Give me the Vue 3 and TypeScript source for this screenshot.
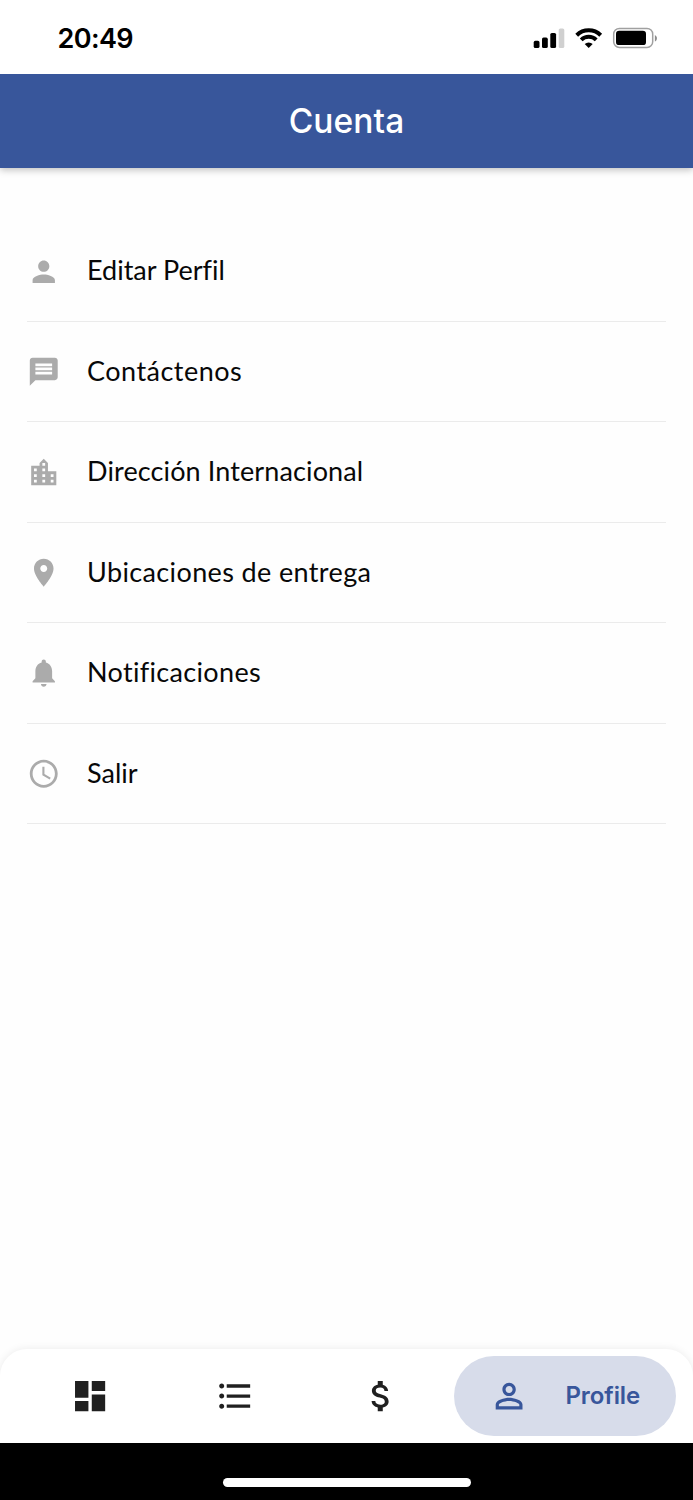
<script setup lang="ts">
interface MenuItem {
  label: string
  spacing: number
  icon: string
}

const items: MenuItem[] = [
  { label: 'Editar Perfil', spacing: 0, icon: 'M12 12c2.21 0 4-1.79 4-4s-1.79-4-4-4-4 1.79-4 4 1.79 4 4 4zm0 2c-2.67 0-8 1.34-8 4v2h16v-2c0-2.66-5.33-4-8-4z' },
  { label: 'Contáctenos', spacing: 0.48, icon: 'M20 2H4c-1.1 0-1.99.9-1.99 2L2 22l4-4h14c1.1 0 2-.9 2-2V4c0-1.1-.9-2-2-2zm-2 12H6v-2h12v2zm0-3H6V9h12v2zm0-3H6V6h12v2z' },
  { label: 'Dirección Internacional', spacing: 0.12, icon: 'M15 11V5l-3-3-3 3v2H3v14h18V11h-6zm-8 8H5v-2h2v2zm0-4H5v-2h2v2zm0-4H5V9h2v2zm6 8h-2v-2h2v2zm0-4h-2v-2h2v2zm0-4h-2V9h2v2zm0-4h-2V5h2v2zm6 12h-2v-2h2v2zm0-4h-2v-2h2v2z' },
  { label: 'Ubicaciones de entrega', spacing: 0.37, icon: 'M12 2C8.13 2 5 5.13 5 9c0 5.25 7 13 7 13s7-7.75 7-13c0-3.87-3.13-7-7-7zm0 9.5c-1.38 0-2.5-1.12-2.5-2.5s1.12-2.5 2.5-2.5 2.5 1.12 2.5 2.5-1.12 2.5-2.5 2.5z' },
  { label: 'Notificaciones', spacing: 0.33, icon: 'M12 22c1.1 0 2-.9 2-2h-4c0 1.1.89 2 2 2zm6-6v-5c0-3.07-1.64-5.64-4.5-6.32V4c0-.83-.67-1.5-1.5-1.5s-1.5.67-1.5 1.5v.68C7.63 5.36 6 7.92 6 11v5l-2 2v1h16v-1l-2-2z' },
  { label: 'Salir', spacing: 0, icon: 'M11.99 2C6.47 2 2 6.48 2 12s4.47 10 9.99 10C17.52 22 22 17.52 22 12S17.52 2 11.99 2zM12 20c-4.42 0-8-3.58-8-8s3.58-8 8-8 8 3.58 8 8-3.58 8-8 8zm.5-13H11v6l5.25 3.15.75-1.23-4.5-2.67z' },
]

const tabs: string[] = [
  'M3 13h8V3H3v10zm0 8h8v-6H3v6zm10 0h8V11h-8v10zm0-18v6h8V3h-8z',
  'M4 10.5c-.83 0-1.5.67-1.5 1.5s.67 1.5 1.5 1.5 1.5-.67 1.5-1.5-.67-1.5-1.5-1.5zm0-6c-.83 0-1.5.67-1.5 1.5S3.17 7.5 4 7.5 5.5 6.83 5.5 6 4.83 4.5 4 4.5zm0 12c-.83 0-1.5.68-1.5 1.5s.68 1.5 1.5 1.5 1.5-.68 1.5-1.5-.67-1.5-1.5-1.5zM7 19h14v-2H7v2zm0-6h14v-2H7v2zm0-8v2h14V5H7z',
  'M11.8 10.9c-2.27-.59-3-1.2-3-2.15 0-1.09 1.01-1.85 2.7-1.85 1.78 0 2.44.85 2.5 2.1h2.21c-.07-1.72-1.12-3.3-3.21-3.81V3h-3v2.16c-1.94.42-3.5 1.68-3.5 3.61 0 2.31 1.91 3.46 4.7 4.13 2.5.6 3 1.48 3 2.41 0 .69-.49 1.79-2.7 1.79-2.06 0-2.87-.92-2.98-2.1h-2.2c.12 2.19 1.76 3.42 3.68 3.83V21h3v-2.15c1.95-.37 3.5-1.5 3.5-3.55 0-2.84-2.43-3.81-4.7-4.4z',
]
</script>

<template>
  <div class="screen">
    <div class="status">
      <span class="time">20:49</span>
      <svg class="indicators" width="126" height="24" viewBox="0 0 126 24">
        <rect x="0.7" y="13.8" width="5.8" height="7.3" rx="1.6" />
        <rect x="9" y="10.6" width="5.8" height="10.5" rx="1.6" />
        <rect x="17.3" y="6" width="5.8" height="15.1" rx="1.6" />
        <rect x="25.7" y="1.5" width="5.6" height="19.6" rx="1.6" fill="#d0d0d0" />
        <g fill="none" stroke="#000" stroke-width="4">
          <path d="M43.7 8.2a17.2 17.2 0 0 1 24 0" />
          <path d="M48.2 12.9a10.7 10.7 0 0 1 15 0" />
        </g>
        <path d="M55.7 21.1l-4-4a5.8 5.8 0 0 1 8 0z" />
        <rect x="80.7" y="1.4" width="39" height="19" rx="5.7" fill="none" stroke="#a0a0a0" stroke-width="1.5" />
        <rect x="83" y="3.8" width="30" height="14.3" rx="3.2" />
        <path d="M121.9 8v6.6c2.7-1.4 2.7-5.2 0-6.6z" fill="#8c8c8c" />
      </svg>
    </div>
    <header class="bar"><h1>Cuenta</h1></header>
    <main>
      <ul class="menu">
        <li v-for="item in items" :key="item.label">
          <svg viewBox="0 0 24 24"><path :d="item.icon" /></svg>
          <span :style="{ letterSpacing: item.spacing + 'px' }">{{ item.label }}</span>
        </li>
      </ul>
    </main>
    <nav class="tabs">
      <a v-for="(tab, index) in tabs" :key="index" class="tab">
        <svg viewBox="0 0 24 24"><path :d="tab" /></svg>
      </a>
      <a class="profile">
        <svg viewBox="0 0 24 24"><path d="M12 5.9c1.16 0 2.1.94 2.1 2.1s-.94 2.1-2.1 2.1S9.9 9.16 9.9 8s.94-2.1 2.1-2.1m0 9c2.97 0 6.1 1.46 6.1 2.1v1.1H5.9V17c0-.64 3.13-2.1 6.1-2.1M12 4C9.79 4 8 5.79 8 8s1.79 4 4 4 4-1.79 4-4-1.79-4-4-4zm0 9c-2.67 0-8 1.34-8 4v3h16v-3c0-2.66-5.33-4-8-4z" /></svg>
        <span>Profile</span>
      </a>
    </nav>
    <footer><div class="home"></div></footer>
  </div>
</template>

<style>
html,
body {
  background: #fefefe;
  overflow: hidden;
}
</style>

<style scoped>
* {
  box-sizing: border-box;
}
.screen {
  width: 693px;
  height: 1500px;
  display: flex;
  flex-direction: column;
  background: #fefefe;
  overflow: hidden;
  font-family: Inter, sans-serif;
}
.status {
  height: 74px;
  flex: none;
  display: flex;
  justify-content: space-between;
  align-items: flex-start;
  padding: 22px 34px 0 57.5px;
  background: #fff;
  position: relative;
  z-index: 1;
}
.time {
  font-size: 27px;
  line-height: 33px;
  font-weight: 600;
  letter-spacing: -0.6px;
}
.indicators {
  margin-top: 5px;
}
.bar {
  height: 93.5px;
  flex: none;
  display: flex;
  align-items: center;
  justify-content: center;
  background: #38569b;
  box-shadow: 0 2px 7px rgba(0, 0, 0, 0.25);
}
h1 {
  margin: 1px 0 0;
  color: #fff;
  font-size: 33.5px;
  font-weight: 500;
  line-height: 40px;
  letter-spacing: 0.1px;
}
main {
  flex: 1;
  padding: 54px 27px 0;
}
.menu {
  list-style: none;
  margin: 0;
  padding: 0;
}
.menu li {
  height: 100.43px;
  display: flex;
  align-items: center;
  gap: 26.5px;
  border-bottom: 1px solid #ebebeb;
  font-family: Lato, sans-serif;
  font-size: 27px;
  line-height: 34px;
  color: #080808;
  white-space: nowrap;
}
.menu span {
  font-variant-ligatures: none;
  margin-bottom: 1.5px;
}
.menu svg {
  width: 33.5px;
  height: 33.5px;
  flex: none;
  fill: #ababab;
  margin-top: 0.6px;
}
.tabs {
  height: 94px;
  flex: none;
  display: flex;
  align-items: center;
  padding: 0 17px;
  background: #fff;
  border-radius: 27px 27px 0 0;
  box-shadow: 0 0 9px rgba(0, 0, 0, 0.08);
}
.tab {
  width: 145.6px;
  display: flex;
  justify-content: center;
}
.tabs svg {
  width: 40.2px;
  height: 40.2px;
  flex: none;
  fill: #202020;
  margin-top: 1px;
}
.profile {
  flex: 1;
  height: 80px;
  border-radius: 40px;
  background: #d7dcea;
  display: flex;
  align-items: center;
  padding-left: 35.5px;
  gap: 36px;
  color: #38569b;
  font-size: 24px;
  font-weight: 600;
  letter-spacing: -0.1px;
}
.tabs .profile svg {
  fill: #38569b;
}
footer {
  height: 57.5px;
  flex: none;
  background: #000;
  display: flex;
  justify-content: center;
  padding-top: 35.5px;
  position: relative;
  z-index: 1;
}
.home {
  width: 248px;
  height: 8.5px;
  border-radius: 5px;
  background: #fff;
}
</style>
